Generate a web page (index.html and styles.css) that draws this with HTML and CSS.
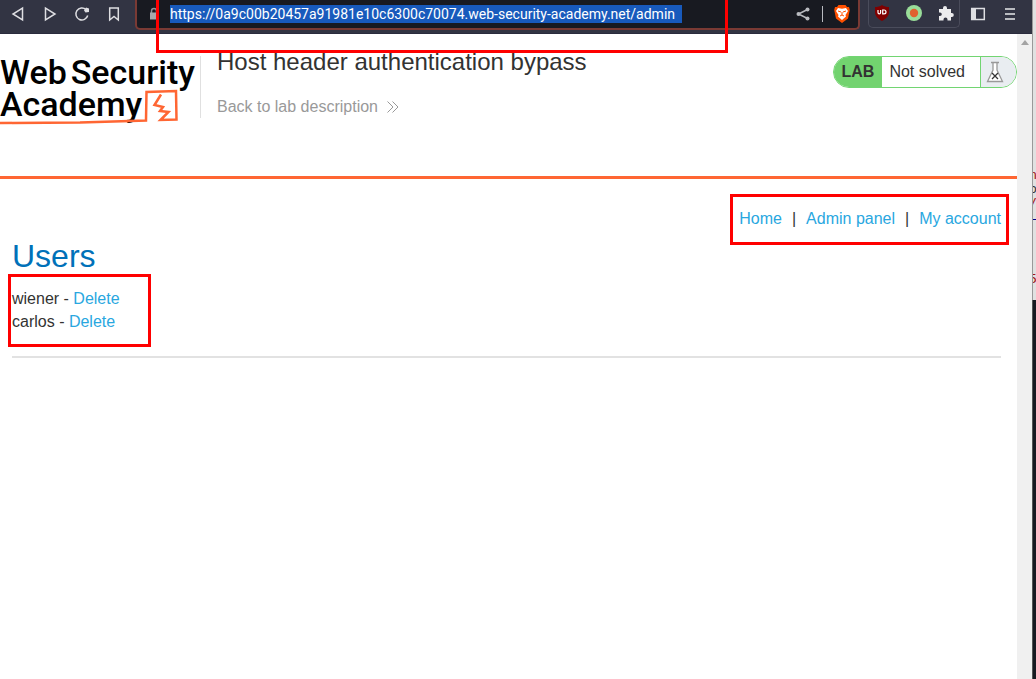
FILE: index.html
```html
<!DOCTYPE html>
<html lang="en">
<head>
<meta charset="utf-8">
<title>Host header authentication bypass</title>
<link rel="stylesheet" href="styles.css">
</head>
<body>
<div class="browser">
  <header class="toolbar">
    <div class="nav-buttons">
      <button class="tool" aria-label="Back"><svg width="16" height="16" viewBox="0 0 16 16"><path d="M12.500 2v12L3 8z"/></svg></button>
      <button class="tool" aria-label="Forward"><svg width="16" height="16" viewBox="0 0 16 16"><path d="M3.500 2v12L13 8z"/></svg></button>
      <button class="tool" aria-label="Reload"><svg width="16" height="16" viewBox="0 0 16 16"><path d="M13.700 9.500A6 6 0 1 1 12 3.600"/><path class="solid" d="M10 4.500 12 1.500l3 1v3.500l-3.500.5z"/></svg></button>
      <button class="tool" aria-label="Bookmark"><svg width="16" height="16" viewBox="0 0 16 16"><path d="M3.700 2h8.600v12L8 10.500 3.700 14z"/></svg></button>
    </div>
    <div class="address">
      <svg class="lock" width="10" height="14" viewBox="0 0 10 14"><path d="M2.500 6V4a2.500 2.500 0 0 1 5 0v2" fill="none" stroke="#8e9096" stroke-width="1.500"/><rect x="1" y="5.500" width="8" height="7" fill="#a7a8ac"/></svg>
      <input class="url" type="text" aria-label="Address" value="https://0a9c00b20457a91981e10c6300c70074.web-security-academy.net/admin">
      <div class="address-tools">
        <button class="tool" aria-label="Share"><svg width="16" height="16" viewBox="0 0 16 16"><path d="M12.500 3.500 3.500 8l9 4.500" stroke="#b9bbc0"/><g fill="#b9bbc0" stroke="none"><circle cx="12.500" cy="3.500" r="2"/><circle cx="3.500" cy="8" r="2"/><circle cx="12.500" cy="12.500" r="2"/></g></svg></button>
        <span class="divider"></span>
        <button class="tool" aria-label="Brave Shields"><svg width="16" height="18" viewBox="0 0 16 18"><path d="M4.500 0h7L13 2l2 0 .8 3-1.800 8.500L8 18l-6-4.500L.2 5 1 2h2z" fill="#ff5000" stroke="none"/><path d="M4 3l4 .8L12 3l2 3-2.500 4 .5 1.500L8 15l-4-3.500.5-1.500L2 6z" fill="#fff" stroke="none"/><path d="M4 6l3 1M12 6 9 7M8 7v3M6 11l2-1 2 1" stroke="#ff5000" stroke-width="1"/></svg></button>
      </div>
    </div>
    <div class="extensions">
      <button class="tool" aria-label="uBlock Origin"><svg width="14" height="16" viewBox="0 0 14 16"><path d="M7 0c2 1.500 4.500 2 7 2v5c0 4-3 7-7 9-4-2-7-5-7-9V2c2.500 0 5-.5 7-2z" fill="#800000" stroke="none"/><path d="M3 5v2.500q0 1.300 1.300 1.300t1.300-1.300V5M7.700 5h1.300q2 0 2 1.900t-2 1.900H7.700z" stroke="#fff" stroke-width="1.200"/></svg></button>
      <button class="tool" aria-label="Proxy switcher"><svg width="16" height="16" viewBox="0 0 16 16"><circle cx="8" cy="8" r="8" fill="#99dd99" stroke="none"/><circle cx="8" cy="8" r="4.200" fill="#e0622f" stroke="none"/></svg></button>
      <button class="tool" aria-label="Extensions"><svg width="16" height="16" viewBox="0 0 16 16"><path d="M1 4h4V3a2 2 0 0 1 4 0v1h4v4h.8a2 2 0 0 1 0 4H13v3.500H9.500v-1a2 2 0 0 0-4 0v1H1V11h1a1.800 1.800 0 0 0 0-3.600H1z" fill="#ececee" stroke="none"/></svg></button>
    </div>
    <button class="tool" aria-label="Sidebar"><svg width="16" height="16" viewBox="0 0 16 16"><rect x="1.700" y="2.500" width="12.600" height="11"/><path class="solid" d="M2 3h4v10H2z"/></svg></button>
    <button class="tool" aria-label="Menu"><svg width="16" height="16" viewBox="0 0 16 16"><path d="M3 3h10M3 8h10M3 13h10" stroke="#b9bbc0" stroke-width="2"/></svg></button>
    <span class="mark mark-url"></span>
  </header>
  <div class="viewport">
    <main class="page">
      <section class="lab-header">
        <a class="logo" href="#" aria-label="Web Security Academy">
          <span class="logo-line"><span>Web</span><span>Security</span></span>
          <span class="logo-line">Academy</span>
          <svg class="logo-art" width="180" height="36" viewBox="0 0 180 36"><path d="M0 34 80 33.500l66-2 .5-28.500L176 2l.5 28.500-16 .5 8-8-8.500-1 3-4-8.500-2L161 5.500" fill="none" stroke="#ff6633" stroke-width="2.500"/></svg>
        </a>
        <div class="title">
          <h2>Host header authentication bypass</h2>
          <a class="back" href="#">Back to lab description <svg width="14" height="14" viewBox="0 0 14 14"><path d="M1.500 1.500 7 7l-5.500 5.500M6.500 1.500 12 7l-5.500 5.500" fill="none" stroke="#999"/></svg></a>
        </div>
        <div class="status">
          <strong>LAB</strong>
          <span class="state">Not solved</span>
          <span class="flask"><svg width="18" height="22" viewBox="0 0 18 22"><path d="M5 1.500h8M7 2v7L1.500 20.500h15L11 9V2" fill="#fff" stroke="#999" stroke-width="1.300"/><path d="M6 12l6 6M12 12l-6 6" stroke="#333" stroke-width="1.300"/></svg></span>
        </div>
      </section>
      <section class="content">
        <nav class="links">
          <a href="#">Home</a><span>|</span><a href="#">Admin panel</a><span>|</span><a href="#">My account</a>
          <span class="mark mark-links"></span>
        </nav>
        <h1>Users</h1>
        <div class="users">
          <div>wiener - <a href="#">Delete</a></div>
          <div>carlos - <a href="#">Delete</a></div>
          <span class="mark mark-users"></span>
        </div>
        <hr>
      </section>
    </main>
    <div class="scrollbar"><svg width="8" height="5" viewBox="0 0 8 5"><path d="M4 0 8 5H0z" fill="#a3a3a3"/></svg></div>
  </div>
</div>
<aside class="behind">
  <div class="behind-light"><span class="red">n</span><span>o</span><span class="red">/</span><i></i><span class="red">5</span></div>
  <div class="behind-dark"></div>
</aside>
</body>
</html>
```
FILE: styles.css
```css
* { box-sizing: border-box; }
body {
  margin: 0;
  display: flex;
  min-height: 100vh;
  overflow: hidden;
  background: #fff;
  color: #333332;
  font: 16px/23px "Liberation Sans", Arial, sans-serif;
}
a { color: #29a7df; text-decoration: none; }
.browser { flex: 1; min-width: 0; display: flex; flex-direction: column; }

.toolbar {
  position: relative;
  display: flex;
  align-items: center;
  height: 34px;
  padding: 0 14px 6px 10px;
  background: #323443;
  border-bottom: 1px solid #2a2b3d;
}
.tool {
  display: flex;
  align-items: center;
  justify-content: center;
  width: 16px;
  height: 18px;
  padding: 0;
  border: 0;
  background: none;
}
.tool svg { fill: none; stroke: #dedee2; stroke-width: 1.5; flex: none; }
.tool .solid { fill: #dedee2; stroke: none; }
.toolbar > .tool { margin-left: 16px; }
.toolbar > .extensions + .tool { margin-left: 10px; }
.nav-buttons { display: flex; gap: 16px; margin-right: 13px; }
.address {
  flex: 1;
  min-width: 0;
  display: flex;
  align-items: center;
  height: 30px;
  padding: 0 8px 0 12px;
  margin-top: 2px;
  background: #181a21;
  border: 2px solid #7a3a34;
  border-top: 0;
  border-radius: 0 0 5px 5px;
}
.lock { flex: none; margin-right: 11px; }
.url {
  width: 512px;
  height: 18px;
  padding: 0;
  border: 0;
  background: #185abc;
  color: #fff;
  font: 14px/18px Roboto, sans-serif;
}
.address-tools { display: flex; align-items: center; gap: 11px; margin-left: auto; }
.divider { width: 1px; height: 16px; background: #b9bbc0; }
.extensions {
  display: flex;
  align-items: center;
  gap: 16px;
  height: 28px;
  margin-left: 8px;
  padding: 0 5px;
  border: 1px solid #4a4c5b;
  border-top: 0;
  border-radius: 0 0 5px 5px;
}

.viewport { flex: 1; display: flex; }
.page { flex: 1; min-width: 0; }
.scrollbar {
  width: 15px;
  padding-top: 6px;
  background: #f0f0f0;
  text-align: center;
  line-height: 0;
}
.lab-header {
  display: flex;
  align-items: flex-start;
  height: 145px;
  padding-top: 22px;
  border-bottom: 3px solid #ff6633;
}
.logo {
  position: relative;
  width: 201px;
  height: 62px;
  border-right: 1px solid #e0e0e0;
  color: #000;
  font: 500 34px/32px Roboto, sans-serif;
}
.logo-line { display: flex; gap: 4px; }
.logo-art { position: absolute; left: 0; top: 33px; }
.title { flex: 1; padding-left: 16px; }
h2 { margin: 0; font-size: 24px; line-height: 12px; font-weight: 400; }
.back { display: flex; align-items: center; gap: 8px; margin-top: 27px; color: #999; }
.status {
  display: flex;
  height: 32px;
  line-height: 30px;
  overflow: hidden;
  border: 1px solid #72d572;
  border-radius: 16px;
}
.status strong { padding: 0 8px; background: #72d36f; }
.state { padding: 0 15px 0 7px; }
.flask {
  display: flex;
  align-items: center;
  width: 36px;
  padding-left: 5px;
  border-left: 1px solid #72d572;
  background: #e9edf1;
}

.content { padding: 28px 16px 0 12px; }
.links {
  position: relative;
  display: flex;
  width: fit-content;
  margin-left: auto;
  gap: 10px;
}
h1 { margin: 8px 0 13px; color: #0071b9; font-size: 32px; line-height: 36px; font-weight: 400; }
.users { position: relative; width: fit-content; }
hr { height: 2px; margin: 23px 0 0; border: 0; background: #e2e2e2; }

.mark { position: absolute; border: 3px solid #f00; pointer-events: none; }
.mark-url { left: 156px; top: -3px; width: 572px; height: 56px; z-index: 1; }
.mark-links { inset: -13px -8px -15px -9px; }
.mark-users { left: -4px; top: -13px; width: 143px; height: 73px; }

.behind { width: 4px; overflow: hidden; display: flex; flex-direction: column; }
.behind-light {
  height: 300px;
  padding-top: 168px;
  background: #e1e1e1;
  border-left: 1px solid #999;
  overflow: hidden;
  font: 13px/14px "DejaVu Sans Mono", monospace;
}
.behind-light span { display: flex; justify-content: flex-end; width: 4px; }
.behind-light .red { color: #a31515; }
.behind-light i { display: block; height: 1px; margin: 9px 0 52px; background: #00008b; }
.behind-dark { flex: 1; background: #181a21; border-left: 1px solid #555; }
```
